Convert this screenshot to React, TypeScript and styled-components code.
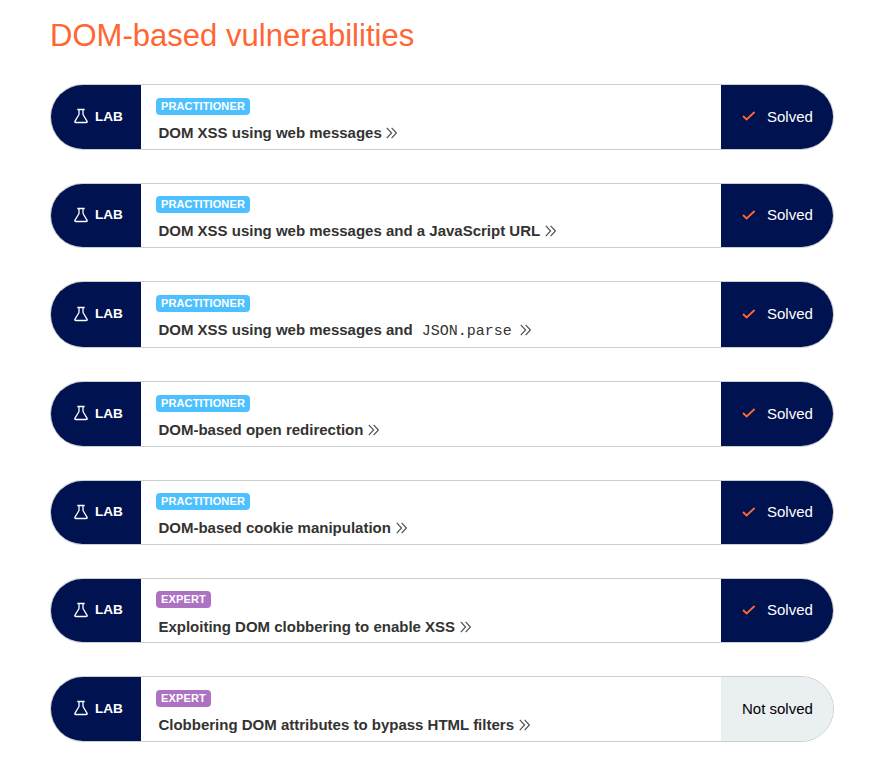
import React from "react";
import styled, { createGlobalStyle } from "styled-components";

const GlobalStyle = createGlobalStyle`
  *, *::before, *::after { box-sizing: border-box; }
  body {
    margin: 0;
    background: #fff;
    color: #333332;
    font-family: Arial, "Liberation Sans", sans-serif;
    overflow: hidden;
  }
`;

const Page = styled.main`
  width: 876px;
  height: 762px;
  padding: 18px 42px 0 50px;
`;

const Title = styled.h2`
  margin: 0 0 30px;
  height: 36px;
  font-size: 31px;
  line-height: 36px;
  letter-spacing: 0.03px;
  font-weight: 400;
  color: #ff6633;
  white-space: nowrap;
`;

const LabList = styled.div`
  display: flex;
  flex-direction: column;
  gap: 33px;
`;

const Row = styled.section<{ $height: number }>`
  display: flex;
  height: ${(p) => p.$height}px;
  border: 1px solid #c8cfcd;
  border-radius: 33px;
  overflow: hidden;
`;

const LabLabel = styled.div`
  display: flex;
  align-items: center;
  flex: 0 0 90px;
  gap: 6px;
  padding: 0 0 2px 23px;
  background: #00124f;
  color: #fff;
  font-size: 13.6px;
  font-weight: 700;
`;

const Details = styled.div<{ $top: number }>`
  flex: 1;
  display: flex;
  flex-direction: column;
  align-items: flex-start;
  padding: ${(p) => p.$top}px 0 0 15px;
`;

const Level = styled.span<{ $expert: boolean }>`
  height: 17px;
  padding: 0 5px;
  border-radius: 4px;
  background: ${(p) => (p.$expert ? "#ad73c2" : "#4dc0ff")};
  color: #fff;
  font-size: 11px;
  line-height: 17px;
  letter-spacing: ${(p) => (p.$expert ? 0.15 : 0.12)}px;
  font-weight: 700;
`;

const LabLink = styled.a<{ $top: number }>`
  display: flex;
  align-items: center;
  margin: ${(p) => p.$top}px 0 0 2.4px;
  height: 18px;
  font-size: 15px;
  line-height: 18px;
  font-weight: 700;
  white-space: pre;
`;

const Code = styled.code`
  margin: 4px 4px 0 9px;
  font-family: "Courier New", "Liberation Mono", monospace;
  font-size: 15px;
  font-weight: 400;
`;

const Status = styled.div<{ $solved: boolean }>`
  display: flex;
  align-items: center;
  flex: 0 0 112px;
  gap: 11px;
  padding: 0 0 2px 21px;
  background: ${(p) => (p.$solved ? "#00124f" : "#eaeff2")};
  color: ${(p) => (p.$solved ? "#fff" : "#000")};
  font-size: 15px;
  white-space: nowrap;
`;

const Chevrons = styled.svg`
  margin-left: 4.600px;
`;

const FlaskIcon = () => (
  <svg width="15" height="16" viewBox="0 0 15 16" fill="none" stroke="#fff" strokeWidth="1.3" strokeLinejoin="round">
    <path d="M3.300 1.500h7.400M5 1.500v5L.9 13.300q-.5 1.200 1 1.200h10.200q1.500 0 1-1.200L9 6.500v-5" />
  </svg>
);

const CheckIcon = () => (
  <svg width="14" height="12" viewBox="0 0 14 12" fill="none" stroke="#ff6633" strokeWidth="1.9">
    <path d="M1 6l3.600 3.500L12.600 2" />
  </svg>
);

const ChevronIcon = () => (
  <Chevrons width="12" height="12" viewBox="0 0 12 12" fill="none" stroke="#505050" strokeWidth="1.2">
    <path d="M.8 .8L5.600 6 .8 11.200M5.600.8L10.400 6l-4.800 5.200" />
  </Chevrons>
);

type Lab = {
  title: string;
  code?: string;
  expert?: boolean;
  unsolved?: boolean;
  height: number;
  top: number;
  titleGap: number;
};

const labs: Lab[] = [
  { title: "DOM XSS using web messages", height: 66, top: 13, titleGap: 9 },
  { title: "DOM XSS using web messages and a JavaScript URL", height: 65, top: 12, titleGap: 9 },
  { title: "DOM XSS using web messages and", code: "JSON.parse", height: 67, top: 13, titleGap: 9 },
  { title: "DOM-based open redirection", height: 66, top: 13, titleGap: 9 },
  { title: "DOM-based cookie manipulation", height: 65, top: 12, titleGap: 9 },
  { title: "Exploiting DOM clobbering to enable XSS", expert: true, height: 65, top: 12, titleGap: 10 },
  { title: "Clobbering DOM attributes to bypass HTML filters", expert: true, unsolved: true, height: 66, top: 13, titleGap: 9 },
];

export default function App() {
  return (
    <>
      <GlobalStyle />
      <Page>
        <Title>DOM-based vulnerabilities</Title>
        <LabList>
          {labs.map((lab) => (
            <Row key={lab.title} $height={lab.height}>
              <LabLabel>
                <FlaskIcon />
                LAB
              </LabLabel>
              <Details $top={lab.top}>
                <Level $expert={!!lab.expert}>{lab.expert ? "EXPERT" : "PRACTITIONER"}</Level>
                <LabLink $top={lab.titleGap}>
                  {lab.title}
                  {lab.code && <Code>{lab.code}</Code>}
                  <ChevronIcon />
                </LabLink>
              </Details>
              <Status $solved={!lab.unsolved}>
                {!lab.unsolved && <CheckIcon />}
                {lab.unsolved ? "Not solved" : "Solved"}
              </Status>
            </Row>
          ))}
        </LabList>
      </Page>
    </>
  );
}
